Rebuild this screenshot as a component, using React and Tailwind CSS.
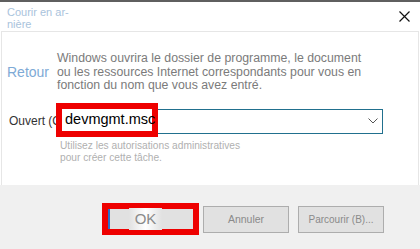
import React from 'react';

const font = { fontFamily: '"Liberation Sans", Arial, sans-serif' };

const Chevron = () => (
  <svg width="10" height="6" viewBox="0 0 10 6" className="text-[#555]">
    <path d="M0.5 0.5 L5 5 L9.5 0.5" fill="none" stroke="currentColor" strokeWidth="1" />
  </svg>
);

const CloseIcon = () => (
  <svg width="11" height="11" viewBox="0 0 11 11" className="text-[#111]">
    <path d="M0.5 0.5 L10.5 10.5 M10.5 0.5 L0.5 10.5" fill="none" stroke="currentColor" strokeWidth="1.2" />
  </svg>
);

const Button = ({ children, className = '' }) => (
  <div className={`flex h-[27px] w-[86px] items-center justify-center whitespace-nowrap border border-[#adadad] bg-[#e1e1e1] text-[#8a8a8a] ${className}`}>
    {children}
  </div>
);

const App = () => {
  return (
    <div className="flex h-[249px] w-[420px] flex-col overflow-hidden border-t-2 border-[#5f5f5f] bg-white" style={font}>
      <div className="flex h-[29px] items-start justify-between pl-[7px] pr-[10px]">
        <div className="pt-[4px] text-[11px] leading-[12px] text-[#a9c3dc]">
          Courir en ar-<br />nière
        </div>
        <div className="pt-[9px]">
          <CloseIcon />
        </div>
      </div>
      <div className="ml-px mr-px flex h-[154px] flex-col border border-b-0 border-[#e6e6e6] bg-white">
        <div className="flex pt-[20px]">
          <div className="flex w-[55px] items-center pl-[5px] text-[14px] text-[#7eaad6]">Retour</div>
          <p className="whitespace-nowrap text-[12.3px] leading-[13.5px] text-[#7b7b7b]">
            Windows ouvrira le dossier de programme, le document<br />
            ou les ressources Internet correspondants pour vous en<br />
            fonction du nom que vous avez entré.
          </p>
        </div>
        <div className="mt-[16px] flex items-center">
          <div className="w-[57px] whitespace-nowrap pl-[7px] text-[12px] text-[#333]">Ouvert (O):</div>
          <div className="relative flex h-[25px] w-[324px] items-center justify-end border border-[#21708e] bg-white pr-[4px]">
            <Chevron />
            <div className="absolute left-[-4px] top-[-7px] flex h-[34px] w-[102px] items-center border-[6px] border-[#ee0000] bg-white pl-[3px] text-[14.5px] text-black">
              devmgmt.msc<span className="ml-px inline-block h-[15px] w-px bg-black" />
            </div>
          </div>
        </div>
        <p className="ml-[58px] mt-[6px] whitespace-nowrap text-[10.2px] leading-[12px] text-[#b0b0b0]">
          Utilisez les autorisations administratives<br />
          pour créer cette tâche.
        </p>
      </div>
      <div className="flex flex-1 items-start bg-[#f0f0f0] pl-[102px] pt-[18px]">
        <div className="border-[6px] border-[#ee0000]">
          <div className="flex h-[20px] w-[85px] items-center justify-center border-l-2 border-[#2a6fc9] bg-[#e1e1e1] pr-[12px] text-[15px] text-[#8a8a8a]">
            <span className="bg-gradient-to-r from-[#e1e1e1] via-white to-[#e1e1e1] px-[6px]">OK</span>
          </div>
        </div>
        <Button className="ml-[4px] mt-[3px] text-[10.5px]">Annuler</Button>
        <Button className="ml-[9px] mt-[3px] text-[10px]">Parcourir (B)...</Button>
      </div>
    </div>
  );
};

export default App;
